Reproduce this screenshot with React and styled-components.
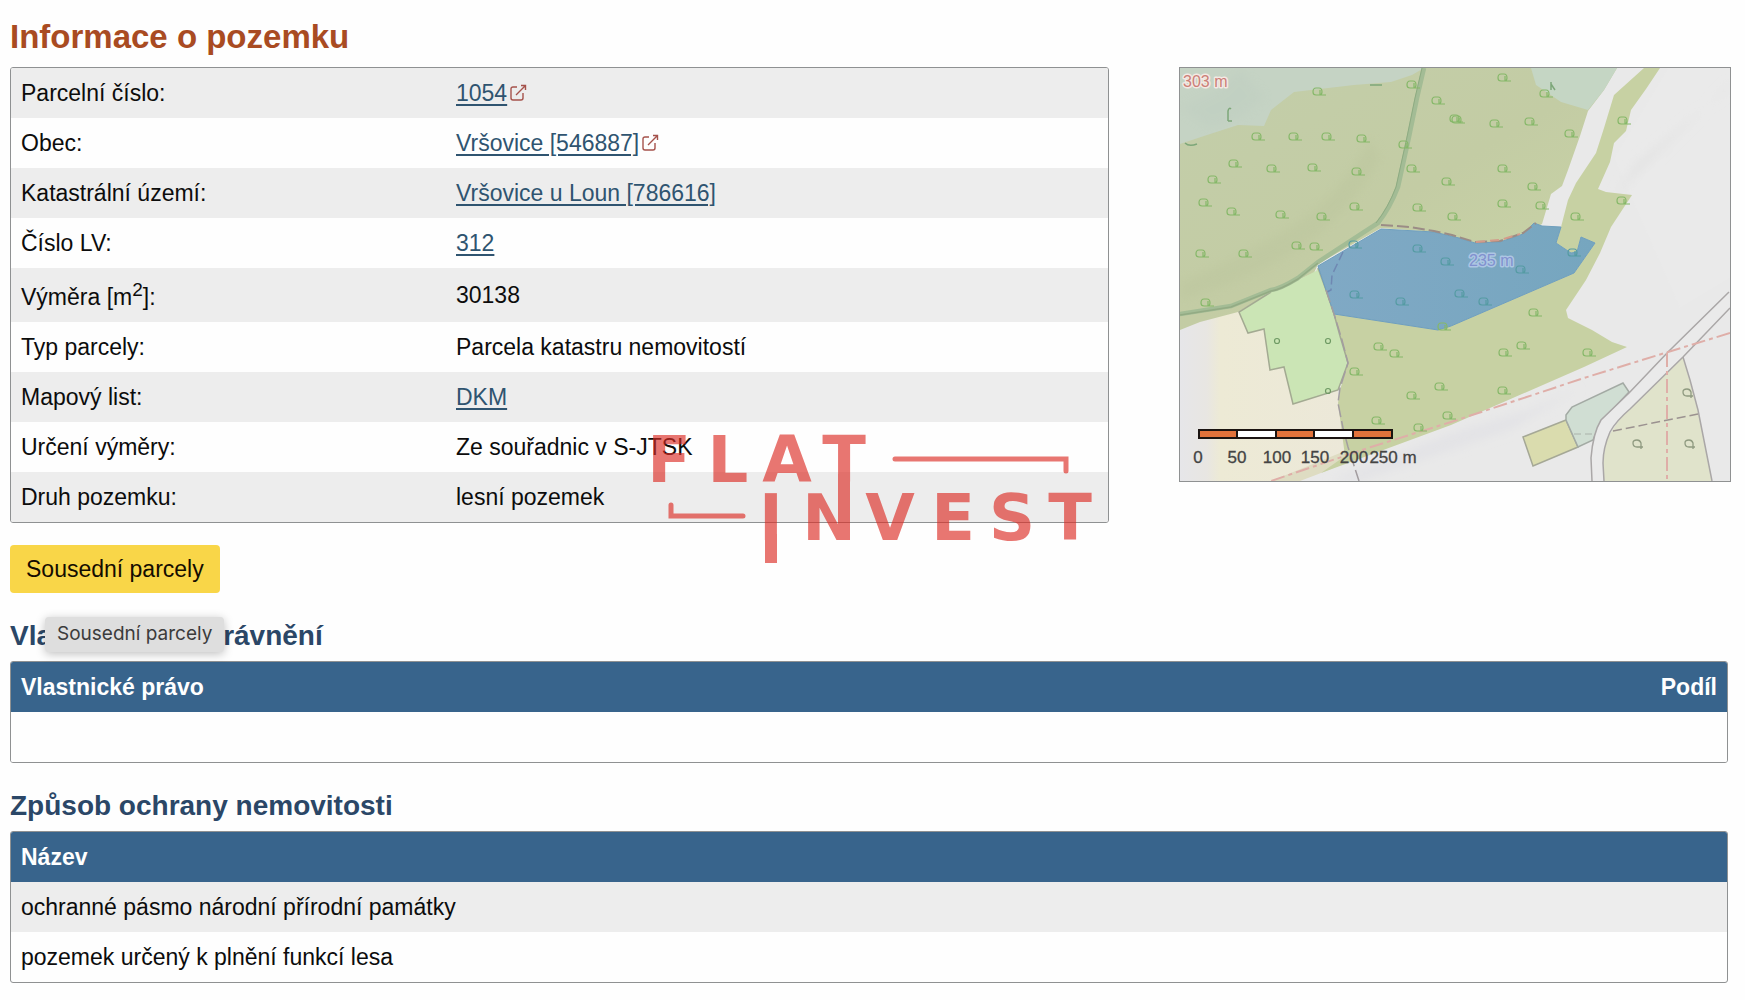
import React from 'react';
import styled, { createGlobalStyle } from 'styled-components';

const GlobalStyle = createGlobalStyle`
  * {
    box-sizing: border-box;
  }

  body {
    margin: 0;
    background: #fefefe;
    color: #0c0c0c;
    font-family: "Liberation Sans", Arial, sans-serif;
    font-size: 23px;
    line-height: 24px;
  }
`;

const Page = styled.main`
  padding: 17px 14px 16px 10px;
`;

const Title = styled.h1`
  margin: 0 0 10px;
  color: #a94b22;
  font-size: 33px;
  line-height: 40px;
`;

const Overview = styled.div`
  display: grid;
  grid-template-columns: 1099fr 552fr;
  gap: 70px;
  align-items: start;
`;

const Details = styled.div`
  position: relative;
`;

const Table = styled.table`
  width: 100%;
  border: 1px solid #8f9192;
  border-radius: 3px;
  border-spacing: 0;
  overflow: hidden;

  tbody tr:nth-child(odd) {
    background: ${({ $plain }) => ($plain ? '#fefefe' : '#ededed')};
  }
`;

const Cell = styled.td`
  height: 50px;
  padding: 13px 10px;
`;

const LabelCell = styled(Cell).attrs({ as: 'th', scope: 'row' })`
  width: 435px;
  font-weight: normal;
  text-align: left;

  sup {
    font-size: 19px;
    line-height: 18px;
  }
`;

const HeadCell = styled.th`
  height: 50px;
  padding: 13px 10px;
  background: #38648c;
  color: #fff;
  font-size: 23px;
  text-align: ${({ $right }) => ($right ? 'right' : 'left')};
`;

const TextLink = styled.a`
  color: #2f5470;
  text-decoration: underline;
  text-decoration-thickness: 2px;
  text-underline-offset: 3px;
`;

const ExternalIcon = styled.svg`
  width: 17px;
  height: 17px;
  margin-left: 3px;
  fill: none;
  stroke: #a5524b;
  stroke-width: 1.4;
`;

const Actions = styled.div`
  position: relative;
  display: flex;
  margin-top: 22px;
`;

const Button = styled.button`
  height: 48px;
  padding: 0 16px;
  border: 0;
  border-radius: 4px;
  background: #f9d648;
  color: #140c00;
  font: inherit;
`;

const Tooltip = styled.div`
  position: absolute;
  left: 35px;
  top: 72px;
  padding: 5px 12px 6px;
  border-radius: 4px;
  background: #dedede;
  box-shadow: 0 2px 10px rgba(0, 0, 0, 0.25);
  color: #3b3b3b;
  font-family: Inter, sans-serif;
  font-size: 19px;
  white-space: nowrap;
`;

const Section = styled.section`
  margin: 26px 3px 0 0;
`;

const Heading = styled.h2`
  margin: 0 0 8px;
  color: #2b4767;
  font-size: 28px;
  line-height: 34px;
`;

const MapBox = styled.a`
  display: block;
  border: 1px solid #8f9192;
  background: #e9e9e9;

  svg {
    display: block;
    width: 100%;
  }
`;

const Watermark = styled.svg`
  position: absolute;
  right: 10px;
  top: 355px;
  width: 452px;
  height: 142px;
  opacity: 0.64;
  pointer-events: none;
  fill: #dc2b23;
  font-family: "DejaVu Sans", sans-serif;
  font-size: 64px;
  font-weight: bold;
  text-anchor: middle;
`;

const parcel = [
  { label: 'Parcelní číslo:', value: '1054', link: true, external: true },
  { label: 'Obec:', value: 'Vršovice [546887]', link: true, external: true },
  { label: 'Katastrální území:', value: 'Vršovice u Loun [786616]', link: true },
  { label: 'Číslo LV:', value: '312', link: true },
  { label: <>Výměra [m<sup>2</sup>]:</>, value: '30138' },
  { label: 'Typ parcely:', value: 'Parcela katastru nemovitostí' },
  { label: 'Mapový list:', value: 'DKM', link: true },
  { label: 'Určení výměry:', value: 'Ze souřadnic v S-JTSK' },
  { label: 'Druh pozemku:', value: 'lesní pozemek' },
];

const protections = [
  'ochranné pásmo národní přírodní památky',
  'pozemek určený k plnění funkcí lesa',
];

const trees = [
  [139, 24], [233, 17], [258, 33], [276, 51], [78, 69], [115, 69], [148, 69],
  [183, 71], [225, 77], [55, 96], [34, 112], [93, 101], [134, 100], [178, 104],
  [233, 101], [268, 114], [25, 135], [53, 144], [102, 147], [143, 149],
  [176, 139], [239, 140], [274, 149], [22, 186], [65, 186], [118, 178],
  [136, 179], [324, 10], [366, 26], [278, 52], [316, 56], [351, 54], [391, 66],
  [444, 53], [324, 101], [354, 119], [324, 136], [362, 138], [397, 149],
  [443, 133], [27, 235], [264, 259], [200, 279], [216, 286], [176, 304],
  [261, 319], [233, 328], [198, 353], [240, 360], [269, 348], [355, 245],
  [343, 278], [325, 285], [409, 285], [324, 323],
];

const parcelTrees = [
  [239, 181], [267, 194], [175, 177], [342, 202], [394, 185], [176, 227],
  [222, 234], [281, 226], [305, 234],
];

const scaleLabels = [[18, '0'], [57, '50'], [97, '100'], [135, '150'], [174, '200'], [213, '250 m']];

const Trees = ({ points, color }) => (
  <g fill="none" stroke={color} strokeWidth="1.2">
    {points.map(([x, y]) => (
      <path
        key={`${x}-${y}`}
        d={`M${x - 3} ${y + 3}q-3 0 -3 -3q0 -4 3 -4h3q3 0 3 4q0 3 -3 3M${x - 3} ${y + 3}h10M${x + 1} ${y - 2}v5`}
      />
    ))}
  </g>
);

const External = () => (
  <ExternalIcon viewBox="0 0 17 17" aria-hidden="true">
    <path d="M7 3H3Q1 3 1 5v9q0 2 2 2h8q2 0 2-2V9M6 11L15 2M11 1.500h4.500v4.500" />
  </ExternalIcon>
);

const ParcelMap = () => (
  <svg viewBox="0 0 550 413" role="img" aria-label="Mapa parcely">
    <defs>
      <linearGradient id="forest" x1="0" y1="0" x2="1" y2="1">
        <stop offset="0" stopColor="#c3ceaa" />
        <stop offset="0.5" stopColor="#c3cca4" />
        <stop offset="1" stopColor="#cbd6a6" />
      </linearGradient>
      <linearGradient id="cream" x1="0" y1="0" x2="1" y2="0">
        <stop offset="0" stopColor="#e6e6e9" />
        <stop offset="0.16" stopColor="#e8e6e2" />
        <stop offset="0.24" stopColor="#edead5" />
        <stop offset="1" stopColor="#ece8d9" />
      </linearGradient>
      <linearGradient id="water" x1="0" y1="0" x2="1" y2="0">
        <stop offset="0" stopColor="#80a9c5" />
        <stop offset="1" stopColor="#76a6bf" />
      </linearGradient>
      <filter id="soft">
        <feGaussianBlur stdDeviation="5" />
      </filter>
    </defs>

    <path d="M488 0L434 90L500 240L550 210V0Z" fill="#eaeaea" />
    <path d="M550 20L455 95L434 130L500 65L550 15Z" fill="#e4e4e4" filter="url(#soft)" />
    <path d="M271 365L350 342L400 320L330 362L180 413H150Z" fill="#e3e3e6" filter="url(#soft)" />

    {/* fields west of the track */}
    <path d="M0 255L58 240L158 300L158 335L168 379L165 395L91 413H0Z" fill="url(#cream)" />
    <path d="M91 413L165 383L190 385L141 405L120 413Z" fill="#dedcc2" />

    {/* forest */}
    <path
      d="M0 0H437L424 22L408 43L400 68L388 102L382 118L371 126L362 156L343 166L320 174L295 175L254 164L201 160L138 196L134 205L91 224L58 244L20 254L0 262Z"
      fill="url(#forest)"
    />
    <path
      d="M154 246L258 262L271 258L394 205L415 175L401 169L397 184L391 185L376 175L381 159L388 132L396 115L416 85L424 60L434 27L464 0H480L466 21L451 42L446 63L434 75L430 94L418 121L426 124L452 127L431 159L420 185L406 212L386 242L388 250L412 262L432 274L447 279L404 299L271 357L141 405L165 388L158 335L160 322L168 295Z"
      fill="#c7d1a3"
    />
    <path
      d="M0 0H244L232 7L211 14L174 17L114 24L91 42L84 58L58 57L24 68L0 76Z"
      fill="#c5d3c4"
    />
    <path d="M351 0L356 17L381 34L408 42L424 22L437 0Z" fill="#c5d6c4" />
    <path d="M0 215Q60 190 110 160Q160 130 190 70L200 90Q150 190 0 232Z" fill="#b9c39b" opacity="0.35" filter="url(#soft)" />
    <path d="M60 0L85 30L60 50L30 60L0 40L40 20Z" fill="#b9c9bd" opacity="0.25" filter="url(#soft)" />

    {/* meadow */}
    <path
      d="M136 203L112 215L91 224L59 244L68 265L84 261L90 302L104 299L113 336L158 322L168 295L160 268L154 246L146 222L138 200Z"
      fill="#cbe5b5"
    />
    <path
      d="M91 224L59 244L68 265L84 261L90 302L104 299L113 336L158 322L168 295L160 268L154 246L146 222L138 200"
      fill="none"
      stroke="#a3aa92"
      strokeWidth="1.5"
    />
    <g fill="none" stroke="#6f9a64" strokeWidth="1.2">
      <circle cx="97" cy="273" r="2.5" />
      <circle cx="148" cy="273" r="2.5" />
      <circle cx="148" cy="323" r="2.5" />
    </g>

    {/* track */}
    <path
      d="M244 0L237 30L229 69L218 119Q210 140 198 155L138 194L118 210Q100 221 91 222L51 238L0 246"
      fill="none"
      stroke="#a3bc95"
      strokeWidth="4.5"
    />
    <path d="M242 0L235 30L227 69L216 119Q208 140 196 155" fill="none" stroke="#8eab82" strokeWidth="1" />
    <path d="M138 195L118 211Q100 222 91 223L51 239L0 247" fill="none" stroke="#93ab84" strokeWidth="1.5" />

    {/* highlighted parcel */}
    <path
      d="M138 198L201 161L254 164L279 170L295 175L320 174L343 166L354 155L362 158L381 159L376 175L391 185L397 184L401 169L415 175L394 205L271 258L258 262L154 246L146 222Z"
      fill="url(#water)"
      stroke="#6f9fbd"
      strokeWidth="1"
    />
    <path d="M201 157L230 159L254 163L272 167L295 174L320 173L343 165L356 155" fill="none" stroke="#9b8c86" strokeWidth="2" strokeDasharray="12 4" />
    <path d="M296 174L320 172L340 166" fill="none" stroke="#d39b8a" strokeWidth="2" strokeDasharray="9 5" />
    <path d="M163 184L152 207L151 222L147 224" fill="none" stroke="#6f88b2" strokeWidth="1.5" strokeDasharray="9 4" />
    <path d="M146 222L154 246L162 272L168 295L160 320L158 335L163 360L168 379L179 413" fill="none" stroke="#a39da0" strokeWidth="1.5" strokeDasharray="13 4" />

    {/* plots and road in the south east */}
    <path d="M343 369L386 352L398 379L353 398Z" fill="#dadcae" stroke="#a5a896" strokeWidth="1.5" />
    <path d="M386 347L392 339L443 315L449 324L421 354L413 372L398 379L386 352Z" fill="#d0ded3" stroke="#a3aaa4" strokeWidth="1.5" />
    <path d="M394 366L413 366" stroke="#aab2aa" strokeDasharray="7 4" />
    <path d="M503 289L518 342L532 413H424L423 395L426 372L441 349Z" fill="#e0e3cb" />
    <path
      d="M549 224L488 284L449 325L421 352Q413 365 411 390L412 413H424L423 395Q423 380 430 364Q436 353 450 341L503 289L550 240Z"
      fill="#eaeaea"
    />
    <g fill="none" stroke="#aaa7a7" strokeWidth="1.5">
      <path d="M549 224L488 284L449 325L421 352Q413 365 411 390L412 413" />
      <path d="M550 240L503 289L450 341Q436 353 430 364Q423 380 423 395L424 413" />
      <path d="M503 289L510 312L518 342L532 413" />
    </g>
    <path d="M433 363L518 346" stroke="#9b9290" strokeWidth="1.5" strokeDasharray="9 4" />
    <g fill="none" stroke="#dfaea8" strokeWidth="2" strokeDasharray="14 4 4 4">
      <path d="M550 265L488 284L404 310L271 354L191 379L91 413" />
      <path d="M487 285V413" />
    </g>
    <g fill="none" stroke="#8f9a80" strokeWidth="1.3">
      {[[509, 325], [459, 376], [511, 376]].map(([x, y]) => (
        <path key={x} d={`M${x + 2} ${y + 5}v-6q-1 -3 -4 -3q-4 0 -4 3q0 4 4 4h6`} />
      ))}
    </g>

    <Trees points={trees} color="#86b869" />
    <Trees points={parcelTrees} color="#559ba3" />
    <path d="M48 53v-10q1 -4 3 -2M48 53h4M371 14v8M371 16l4 6M5 75q4 4 12 1M190 17h12" fill="none" stroke="#7da779" strokeWidth="1.5" />

    <g fontFamily="Liberation Sans, Arial, sans-serif" paintOrder="stroke" strokeLinejoin="round">
      <text x="3" y="19" fontSize="16" fill="#cb7f78" stroke="#f3e9e3" strokeWidth="3">303 m</text>
      <text x="289" y="198" fontSize="16" fill="#8191cf" stroke="#adc6e3" strokeWidth="3">235 m</text>
    </g>

    {/* scale */}
    <g stroke="#1b1411" strokeWidth="2">
      {[19, 57, 96, 134, 173].map((x, i) => (
        <rect key={x} x={x} y="362" width="39" height="8" fill={i % 2 ? '#fff' : '#e2733b'} />
      ))}
    </g>
    <g fontFamily="Liberation Sans, Arial, sans-serif" fontSize="17" fill="#444" stroke="#444" strokeWidth="0.3" textAnchor="middle">
      {scaleLabels.map(([x, text]) => (
        <text key={text} x={x} y="395">{text}</text>
      ))}
    </g>
  </svg>
);

const Logo = () => (
  <Watermark viewBox="0 -12 452 142" role="img" aria-label="Flat Invest">
    <text y="48" x="22">F</text>
    <text y="48" x="81">L</text>
    <text y="48" x="140">A</text>
    <text y="48" x="197">T</text>
    <text y="106" x="124">I</text>
    <text y="106" x="182">N</text>
    <text y="106" x="243">V</text>
    <text y="106" x="306">E</text>
    <text y="106" x="365">S</text>
    <text y="106" x="423">T</text>
    {/* stems that run past their letters */}
    <rect x="191" y="40" width="12" height="66" />
    <rect x="118" y="100" width="12" height="29" />
    <path d="M248 25H419V37M24 71V82H96" fill="none" stroke="#dc2b23" strokeWidth="5" strokeLinecap="round" />
  </Watermark>
);

const App = () => {
  return (
    <>
      <GlobalStyle />
      <Page>
        <Title>Informace o pozemku</Title>
        <Overview>
          <Details>
            <Table>
              <tbody>
                {parcel.map(({ label, value, link, external }) => (
                  <tr key={value}>
                    <LabelCell>{label}</LabelCell>
                    <Cell>
                      {link ? <TextLink href="#">{value}</TextLink> : value}
                      {external && <External />}
                    </Cell>
                  </tr>
                ))}
              </tbody>
            </Table>
            <Logo />
          </Details>
          <MapBox href="#">
            <ParcelMap />
          </MapBox>
        </Overview>

        <Actions>
          <Button type="button" aria-describedby="neighbours-tip">Sousední parcely</Button>
          <Tooltip role="tooltip" id="neighbours-tip">Sousední parcely</Tooltip>
        </Actions>

        <Section>
          <Heading>Vlastníci, jiní oprávnění</Heading>
          <Table $plain>
            <thead>
              <tr>
                <HeadCell>Vlastnické právo</HeadCell>
                <HeadCell $right>Podíl</HeadCell>
              </tr>
            </thead>
            <tbody>
              <tr>
                <Cell />
                <Cell />
              </tr>
            </tbody>
          </Table>
        </Section>

        <Section>
          <Heading>Způsob ochrany nemovitosti</Heading>
          <Table>
            <thead>
              <tr>
                <HeadCell>Název</HeadCell>
              </tr>
            </thead>
            <tbody>
              {protections.map((name) => (
                <tr key={name}>
                  <Cell>{name}</Cell>
                </tr>
              ))}
            </tbody>
          </Table>
        </Section>
      </Page>
    </>
  );
};

export default App;
